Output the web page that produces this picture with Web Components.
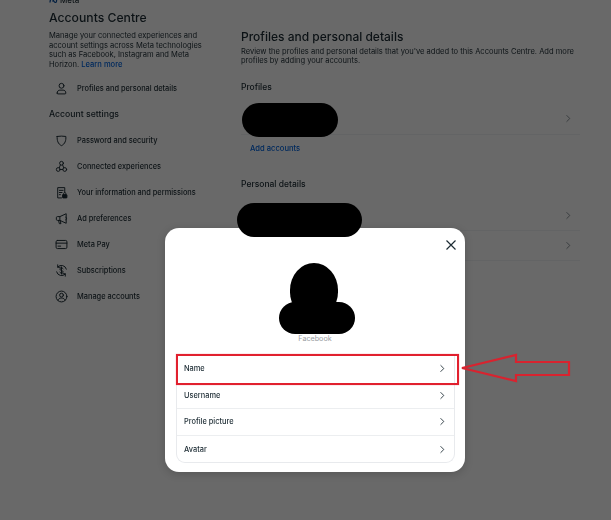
<!DOCTYPE html>
<html lang="en">
<head>
<meta charset="utf-8">
<title>Accounts Centre</title>
<style>
  html, body { margin: 0; height: 100%; overflow: hidden; background: #fff; }
  body { font-family: Inter, "Liberation Sans", sans-serif; color: #1c2b33; }
</style>
</head>
<body>
<ac-app></ac-app>
<script>
(function () {
  'use strict';

  const ICONS = {
    person: '<circle cx="12" cy="7" r="4.5"/><path d="M4 20.5c0-3.6 2.2-5.5 5-5.5h6c2.8 0 5 1.900 5 5.500 0 1-.6 1.500-1.500 1.500h-13C4.600 22 4 21.500 4 20.500z"/>',
    shield: '<path d="M4 4.500c5-.8 11-.8 16 0 .6 7.500-1.500 14-8 17-6.500-3-8.600-9.500-8-17z"/>',
    nodes: '<circle cx="12" cy="6" r="3.500"/><circle cx="6" cy="17.500" r="3.500"/><circle cx="18" cy="17.500" r="3.500"/><path d="M10 9l-2.200 5.500M14 9l2.200 5.500M9.500 17.500h5"/>',
    info: '<path d="M12 22H5V3h13v8"/><path d="M8 8h7M8 12h5M8 16h2"/><rect x="14" y="16" width="8" height="6" rx="1" fill="currentColor"/><path d="M16 16v-2a2 2 0 0 1 4 0v2"/>',
    megaphone: '<path d="M20 3.500L9 8.500H4.500a2 2 0 0 0-2 2v3a2 2 0 0 0 2 2H9l11 5z"/><path d="M6.500 15.500l1.500 6h3l-1.500-5.500M9 8.500v7M20 9.500c2 .5 2 4.500 0 5"/>',
    card: '<rect x="2" y="4.500" width="20" height="15" rx="2.500"/><path d="M2 9.500h20M5.500 15h5"/>',
    subs: '<path d="M5 5.500A9.500 9.500 0 0 1 21 9.500M3 14.500A9.500 9.500 0 0 0 19 18.500"/><path d="M5 1.500v4.500h4.500M19 22.500V18h-4.500"/><path d="M15 9c-.6-1.200-1.600-1.800-3-1.800-1.700 0-3 .9-3 2.300 0 3.300 6 1.700 6 5 0 1.400-1.300 2.300-3 2.300-1.400 0-2.500-.6-3-1.800M12 5.500v13"/>',
    account: '<circle cx="12" cy="12" r="10"/><circle cx="12" cy="9.500" r="3.500"/><path d="M5.500 19c1-3 3.200-4.200 6.500-4.200s5.500 1.200 6.500 4.200"/>'
  };

  const CHEVRON = '<svg width="8" height="9" viewBox="0 0 11 12" fill="none" stroke="currentColor" stroke-width="1.200"><path d="M3.500 1.500L8 6 3.500 10.500"/></svg>';

  class AcNavItem extends HTMLElement {
    constructor() {
      super();
      this.attachShadow({ mode: 'open' });
    }

    connectedCallback() {
      const icon = ICONS[this.getAttribute('icon')] || '';
      this.shadowRoot.innerHTML = `
        <style>
          :host {
            display: flex;
            align-items: center;
            height: 26px;
            padding-left: 6px;
            gap: 8px;
            font-size: 7.4px;
            font-weight: 500;
          }
          svg { width: 13px; height: 13px; flex: none; margin-right: 1px; }
        </style>
        <svg viewBox="0 0 24 24" fill="none" stroke="currentColor" stroke-width="1.800" stroke-linecap="round" stroke-linejoin="round">${icon}</svg>
        <slot></slot>
      `;
    }
  }

  class AcSidebar extends HTMLElement {
    constructor() {
      super();
      this.attachShadow({ mode: 'open' });
      this.shadowRoot.innerHTML = `
        <style>
          :host { display: block; width: 168px; flex: none; margin-top: -5px; }
          .logo { display: flex; align-items: center; gap: 2px; height: 10px; font-size: 8px; font-weight: 500; }
          .logo svg { width: 9px; height: 6px; color: #0a4f9e; }
          h1 { margin: 5px 0 0; font-size: 12.2px; line-height: 16px; font-weight: 500; }
          p { margin: 5px 0 0; font-size: 7.55px; line-height: 9.6px; }
          a { color: #0064e0; font-weight: 500; text-decoration: none; }
          h2 { margin: 0; height: 26px; line-height: 26px; font-size: 8.7px; font-weight: 500; }
          .first { margin-top: 6px; }
        </style>
        <div class="logo">
          <svg viewBox="0 0 18 12" fill="none" stroke="currentColor" stroke-width="2.500"><path d="M2 11c0-6 3-9 5-7s3 7 6 7 3-9 0-9-4 5-6 7"/></svg>
          <span>Meta</span>
        </div>
        <h1>Accounts Centre</h1>
        <p>Manage your connected experiences and account settings across Meta technologies such as Facebook, Instagram and Meta Horizon. <a>Learn more</a></p>
        <div class="first"><slot name="top"></slot></div>
        <h2>Account settings</h2>
        <slot></slot>
      `;
    }
  }

  class AcRow extends HTMLElement {
    constructor() {
      super();
      this.attachShadow({ mode: 'open' });
      this.shadowRoot.innerHTML = `
        <style>
          :host {
            display: flex;
            align-items: center;
            justify-content: space-between;
            box-sizing: border-box;
            height: var(--row-h, 30px);
            padding: var(--row-pad, 0 8px 0 9px);
            border-bottom: 1px solid var(--row-line, #f1f2f4);
            font-size: 7.4px;
            font-weight: 500;
            color: #1c2b33;
          }
          :host(:last-of-type) { border-bottom: var(--row-last-line, 1px solid #f1f2f4); }
          svg { display: block; color: var(--chevron, #1c2b33); }
        </style>
        <span><slot></slot></span>
        ${CHEVRON}
      `;
    }
  }

  class AcMain extends HTMLElement {
    constructor() {
      super();
      this.attachShadow({ mode: 'open' });
      this.shadowRoot.innerHTML = `
        <style>
          :host { display: block; width: 339px; flex: none; --chevron: #7b858c; }
          h1 { margin: 27.500px 0 0; font-size: 12px; line-height: 17px; font-weight: 500; }
          p { margin: 2px 0 0; font-size: 7.55px; line-height: 9.700px; width: 339px; }
          h2 { margin: 0; font-size: 8.5px; line-height: 12px; font-weight: 500; }
          .profiles { margin-top: 14.6px; }
          .card { margin-top: 10px; --row-h: 32px; }
          .add { display: block; margin: 9px 0 0 9px; font-size: 7.6px; line-height: 10px; color: #0064e0; font-weight: 500; }
          .details { margin-top: 24.5px; }
          .card2 { margin-top: 11px; --row-h: 30px; }
        </style>
        <h1>Profiles and personal details</h1>
        <p>Review the profiles and personal details that you've added to this Accounts Centre. Add more profiles by adding your accounts.</p>
        <h2 class="profiles">Profiles</h2>
        <div class="card"><slot name="profiles"></slot></div>
        <a class="add">Add accounts</a>
        <h2 class="details">Personal details</h2>
        <div class="card2"><slot name="details"></slot></div>
      `;
    }
  }

  class AcModal extends HTMLElement {
    constructor() {
      super();
      this.attachShadow({ mode: 'open' });
      this.shadowRoot.innerHTML = `
        <style>
          :host {
            position: absolute;
            left: 165px;
            top: 228px;
            box-sizing: border-box;
            width: 300px;
            height: 244px;
            padding: 105.5px 11px 0;
            background: #fff;
            border-radius: 14px;
            box-shadow: 0 2px 8px rgba(0, 0, 0, .18);
            display: block;
          }
          .close { position: absolute; right: 8px; top: 11px; width: 12px; height: 12px; color: #1c2b33; }
          .source { height: 10px; text-align: center; font-size: 7.2px; line-height: 10px; color: #9a9ea3; }
          .list {
            margin-top: 12.5px;
            width: 279px;
            border: 1px solid #e8eaed;
            border-top: 0;
            border-radius: 0 0 9px 9px;
            box-sizing: border-box;
            filter: blur(.25px);
            --row-h: 26.6px;
            --row-pad: 0 8px 0 7px;
            --row-line: #eceef0;
            --row-last-line: 0;
          }
        </style>
        <svg class="close" viewBox="0 0 12 12" fill="none" stroke="currentColor" stroke-width="1.200"><path d="M1.500 1.500l9 9M10.500 1.500l-9 9"/></svg>
        <div class="source">Facebook</div>
        <div class="list"><slot></slot></div>
      `;
    }
  }

  // red callout drawn over the screenshot, and the black redaction blobs
  class AcMarkup extends HTMLElement {
    constructor() {
      super();
      this.attachShadow({ mode: 'open' });
      this.shadowRoot.innerHTML = `
        <style>
          :host { position: absolute; inset: 0; display: block; pointer-events: none; }
          .blob { position: absolute; background: #000; border-radius: 18px; }
          .box { position: absolute; left: 176px; top: 354px; width: 283px; height: 31px; box-sizing: border-box; border: 2.5px solid #e1202e; box-shadow: 0 0 1px #f38a92; }
          svg { position: absolute; left: 0; top: 0; }
        </style>
        <div class="blob" style="left:242px;top:103px;width:96px;height:34px"></div>
        <div class="blob" style="left:237px;top:203px;width:125px;height:34px"></div>
        <div class="blob" style="left:290px;top:263px;width:48px;height:54px;border-radius:50% 50% 46% 46%"></div>
        <div class="blob" style="left:279px;top:302px;width:76px;height:32px;border-radius:17px"></div>
        <div class="box"></div>
        <svg width="611" height="520" fill="none" stroke="#d8232f" stroke-width="2.2">
          <path d="M462 368L516 355V362H569V375H516V381Z"/>
        </svg>
      `;
    }
  }

  class AcApp extends HTMLElement {
    constructor() {
      super();
      this.attachShadow({ mode: 'open' });
      this.shadowRoot.innerHTML = `
        <style>
          :host { position: relative; display: block; width: 611px; height: 520px; overflow: hidden; }
          .page { display: flex; gap: 24px; padding-left: 49px; filter: blur(.3px); }
          .dim { position: absolute; inset: 0; background: rgba(0, 0, 0, .59); }
        </style>
        <div class="page"><slot name="page"></slot></div>
        <div class="dim"></div>
        <slot name="over"></slot>
      `;
      this.innerHTML = `
        <ac-sidebar slot="page">
          <ac-nav-item slot="top" icon="person">Profiles and personal details</ac-nav-item>
          <ac-nav-item icon="shield">Password and security</ac-nav-item>
          <ac-nav-item icon="nodes">Connected experiences</ac-nav-item>
          <ac-nav-item icon="info">Your information and permissions</ac-nav-item>
          <ac-nav-item icon="megaphone">Ad preferences</ac-nav-item>
          <ac-nav-item icon="card">Meta Pay</ac-nav-item>
          <ac-nav-item icon="subs">Subscriptions</ac-nav-item>
          <ac-nav-item icon="account">Manage accounts</ac-nav-item>
        </ac-sidebar>
        <ac-main slot="page">
          <ac-row slot="profiles"></ac-row>
          <ac-row slot="details"></ac-row>
          <ac-row slot="details"></ac-row>
        </ac-main>
        <ac-modal slot="over">
          <ac-row style="--row-line: transparent">Name</ac-row>
          <ac-row>Username</ac-row>
          <ac-row>Profile picture</ac-row>
          <ac-row>Avatar</ac-row>
        </ac-modal>
        <ac-markup slot="over"></ac-markup>
      `;
    }
  }

  customElements.define('ac-nav-item', AcNavItem);
  customElements.define('ac-sidebar', AcSidebar);
  customElements.define('ac-row', AcRow);
  customElements.define('ac-main', AcMain);
  customElements.define('ac-modal', AcModal);
  customElements.define('ac-markup', AcMarkup);
  customElements.define('ac-app', AcApp);
})();
</script>
</body>
</html>
